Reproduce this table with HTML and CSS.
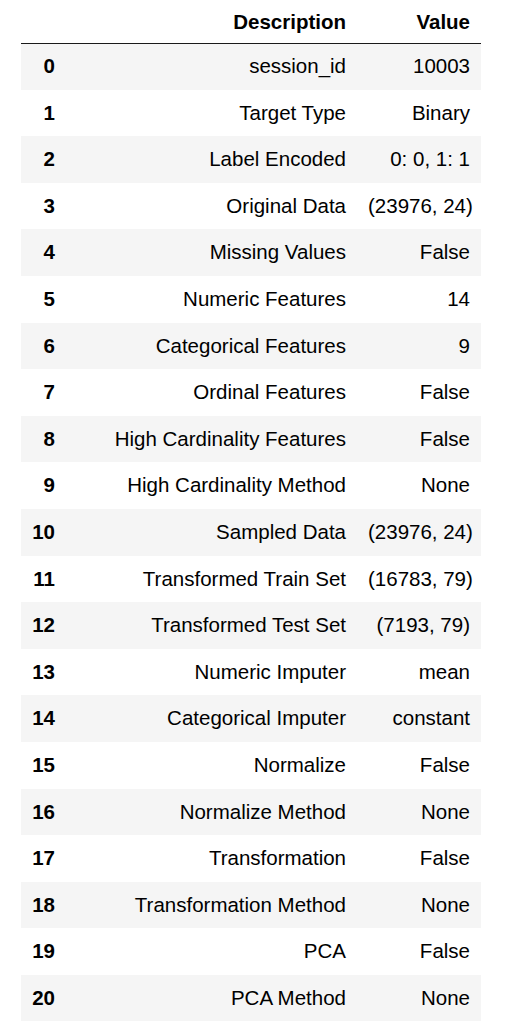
FILE: index.html
```html
<!DOCTYPE html>
<html>
<head>
<meta charset="utf-8">
<link rel="stylesheet" href="styles.css">
</head>
<body>
<table class="df">
  <colgroup>
    <col class="c-idx"><col class="c-desc"><col class="c-val">
  </colgroup>
  <thead>
    <tr><th></th><th>Description</th><th>Value</th></tr>
  </thead>
  <tbody>
    <tr><th>0</th><td>session_id</td><td>10003</td></tr>
    <tr><th>1</th><td>Target Type</td><td>Binary</td></tr>
    <tr><th>2</th><td>Label Encoded</td><td>0: 0, 1: 1</td></tr>
    <tr><th>3</th><td>Original Data</td><td>(23976, 24)</td></tr>
    <tr><th>4</th><td>Missing Values</td><td>False</td></tr>
    <tr><th>5</th><td>Numeric Features</td><td>14</td></tr>
    <tr><th>6</th><td>Categorical Features</td><td>9</td></tr>
    <tr><th>7</th><td>Ordinal Features</td><td>False</td></tr>
    <tr><th>8</th><td>High Cardinality Features</td><td>False</td></tr>
    <tr><th>9</th><td>High Cardinality Method</td><td>None</td></tr>
    <tr><th>10</th><td>Sampled Data</td><td>(23976, 24)</td></tr>
    <tr><th>11</th><td>Transformed Train Set</td><td>(16783, 79)</td></tr>
    <tr><th>12</th><td>Transformed Test Set</td><td>(7193, 79)</td></tr>
    <tr><th>13</th><td>Numeric Imputer</td><td>mean</td></tr>
    <tr><th>14</th><td>Categorical Imputer</td><td>constant</td></tr>
    <tr><th>15</th><td>Normalize</td><td>False</td></tr>
    <tr><th>16</th><td>Normalize Method</td><td>None</td></tr>
    <tr><th>17</th><td>Transformation</td><td>False</td></tr>
    <tr><th>18</th><td>Transformation Method</td><td>None</td></tr>
    <tr><th>19</th><td>PCA</td><td>False</td></tr>
    <tr><th>20</th><td>PCA Method</td><td>None</td></tr>
  </tbody>
</table>
</body>
</html>
```
FILE: styles.css
```css
html, body {
  margin: 0;
  padding: 0;
  background: #fff;
}
body {
  font-family: "Liberation Sans", Arial, Helvetica, sans-serif;
  font-size: 20.5px;
  color: #000;
}
.df {
  margin-left: 21px;
  border-collapse: collapse;
  border-spacing: 0;
  table-layout: fixed;
  width: 460px;
}
.c-idx { width: 45px; }
.c-desc { width: 291px; }
.c-val { width: 124px; }
.df th, .df td {
  padding: 0 11px;
  text-align: right;
  vertical-align: middle;
  white-space: nowrap;
  line-height: 1;
}
.df thead th {
  height: 43px;
  font-weight: bold;
  border-bottom: 1.5px solid #1a1a1a;
  padding-top: 1px;
  box-sizing: border-box;
}
.df tbody th {
  font-weight: bold;
}
.df tbody tr {
  height: 46.6px;
}
.df tbody tr:nth-child(odd) {
  background: #f5f5f5;
}
```
